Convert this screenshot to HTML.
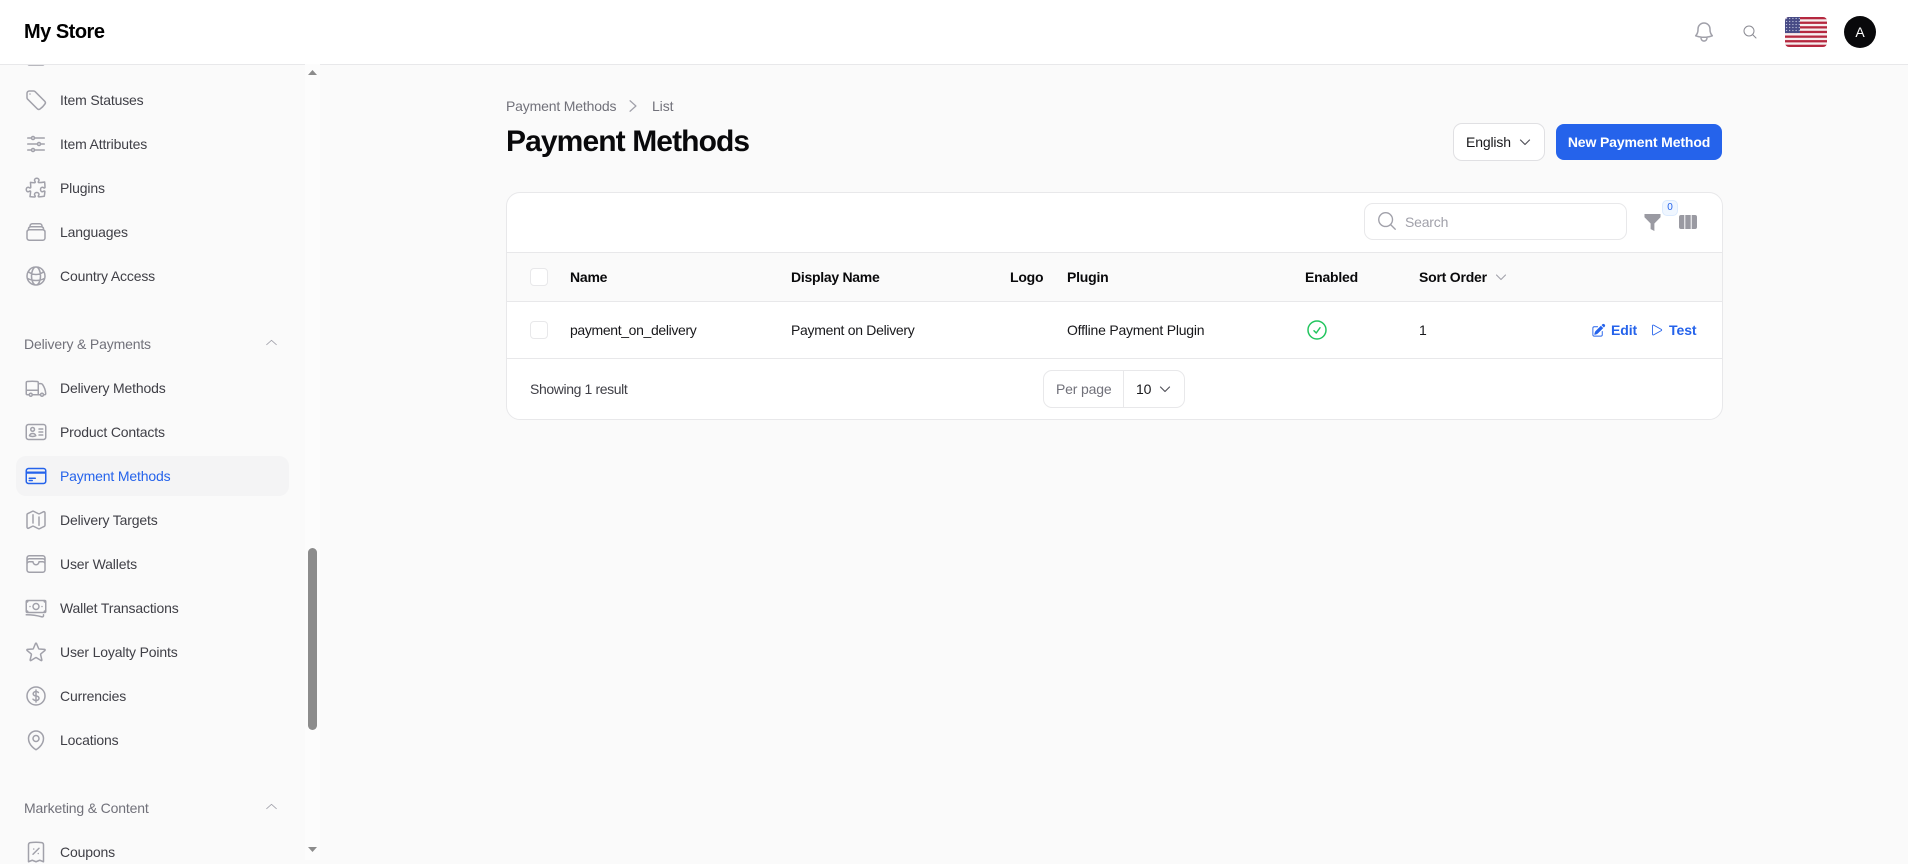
<!DOCTYPE html>
<html lang="en"><head><meta charset="utf-8"><title>Payment Methods</title>
<style>
*{box-sizing:border-box}
html,body{margin:0;padding:0;width:1908px;height:860px;overflow:hidden;background:#fafafa;font-family:"Liberation Sans",sans-serif;color:#18181b}
.t{position:absolute;white-space:nowrap;line-height:20px;font-size:14px;letter-spacing:-.3px}
.s{color:#3f3f46;left:60px;letter-spacing:-.16px}
.g{color:#71717a;left:24px;letter-spacing:-.16px}
.b{font-weight:700;color:#09090b;letter-spacing:-.22px}
.i{position:absolute;fill:none;stroke:#a1a1aa;stroke-width:1.5;stroke-linecap:round;stroke-linejoin:round}
.box{position:absolute;background:#fff;border:1px solid #e8e8ea}
.l{position:absolute;background:#e8e8ea;height:1px}
.cb{position:absolute;left:530px;width:18px;height:18px;border:1px solid #e8e8ea;border-radius:4px;background:#fff}
</style></head><body>

<div style="position:absolute;left:16px;top:456px;width:273px;height:40px;background:#f4f4f5;border-radius:10px"></div>

<svg class="i" style="left:24px;top:42px" width="24" height="24" viewBox="0 0 24 24"><rect x="3.500" y="2" width="17" height="21" rx="2"/></svg>
<svg class="i" style="left:24px;top:88px" width="24" height="24" viewBox="0 0 24 24"><path d="M9.568 3H5.250A2.250 2.250 0 0 0 3 5.250v4.318c0 .597.237 1.170.659 1.591l9.581 9.581c.699.699 1.780.872 2.607.330a18.095 18.095 0 0 0 5.223-5.223c.542-.827.369-1.908-.33-2.607L11.160 3.660A2.250 2.250 0 0 0 9.568 3Z"/><path d="M6 6h.008v.008H6V6Z"/></svg>
<svg class="i" style="left:24px;top:132px" width="24" height="24" viewBox="0 0 24 24"><path d="M10.500 6h9.750M10.500 6a1.500 1.500 0 1 1-3 0m3 0a1.500 1.500 0 1 0-3 0M3.750 6H7.500m3 12h9.750m-9.750 0a1.500 1.500 0 0 1-3 0m3 0a1.500 1.500 0 0 0-3 0m-3.750 0H7.500m9-6h3.750m-3.750 0a1.500 1.500 0 0 1-3 0m3 0a1.500 1.500 0 0 0-3 0m-9.750 0h9.750"/></svg>
<svg class="i" style="left:24px;top:176px" width="24" height="24" viewBox="0 0 24 24"><path d="M14.250 6.087c0-.355.186-.676.401-.959.221-.29.349-.634.349-1.003 0-1.036-1.007-1.875-2.250-1.875s-2.250.84-2.250 1.875c0 .369.128.713.349 1.003.215.283.401.604.401.959a.64.64 0 0 1-.657.643 48.390 48.390 0 0 1-4.163-.3c.186 1.613.293 3.250.315 4.907a.656.656 0 0 1-.658.663c-.355 0-.676-.186-.959-.401a1.647 1.647 0 0 0-1.003-.349c-1.036 0-1.875 1.007-1.875 2.250s.84 2.250 1.875 2.250c.369 0 .713-.128 1.003-.349.283-.215.604-.401.959-.401.31 0 .555.26.532.57a48.039 48.039 0 0 1-.642 5.056c1.518.19 3.058.309 4.616.354a.64.64 0 0 0 .657-.643c0-.355-.186-.676-.401-.959a1.647 1.647 0 0 1-.349-1.003c0-1.035 1.008-1.875 2.250-1.875 1.243 0 2.250.84 2.250 1.875 0 .369-.128.713-.349 1.003-.215.283-.4.604-.4.959 0 .333.277.599.61.58a48.100 48.100 0 0 0 5.427-.63 48.050 48.050 0 0 0 .582-4.717.532.532 0 0 0-.533-.57c-.355 0-.676.186-.959.401-.29.221-.634.349-1.003.349-1.035 0-1.875-1.007-1.875-2.250s.84-2.250 1.875-2.250c.37 0 .713.128 1.003.349.283.215.604.401.96.401a.656.656 0 0 0 .658-.663 48.422 48.422 0 0 0-.37-5.360c-1.886.342-3.810.574-5.766.689a.578.578 0 0 1-.61-.58Z"/></svg>
<svg class="i" style="left:24px;top:220px" width="24" height="24" viewBox="0 0 24 24"><path d="M6 6.878V6a2.250 2.250 0 0 1 2.250-2.250h7.500A2.250 2.250 0 0 1 18 6v.878m-12 0c.235-.083.487-.128.75-.128h10.500c.263 0 .515.045.75.128m-12 0A2.250 2.250 0 0 0 4.500 9v.878m13.500-3A2.250 2.250 0 0 1 19.500 9v.878m0 0a2.246 2.246 0 0 0-.75-.128H5.250c-.263 0-.515.045-.75.128m15 0A2.250 2.250 0 0 1 21 12v6a2.250 2.250 0 0 1-2.250 2.250H5.250A2.250 2.250 0 0 1 3 18v-6c0-.98.626-1.813 1.500-2.122"/></svg>
<svg class="i" style="left:24px;top:264px" width="24" height="24" viewBox="0 0 24 24"><path d="M12 21a9.004 9.004 0 0 0 8.716-6.747M12 21a9.004 9.004 0 0 1-8.716-6.747M12 21c2.485 0 4.500-4.030 4.500-9S14.485 3 12 3m0 18c-2.485 0-4.500-4.030-4.500-9S9.515 3 12 3m0 0a8.997 8.997 0 0 1 7.843 4.582M12 3a8.997 8.997 0 0 0-7.843 4.582m15.686 0A11.953 11.953 0 0 1 12 10.500c-2.998 0-5.740-1.100-7.843-2.918m15.686 0A8.959 8.959 0 0 1 21 12c0 .778-.099 1.533-.284 2.253m0 0A17.919 17.919 0 0 1 12 16.500c-3.162 0-6.133-.815-8.716-2.247m0 0A9.015 9.015 0 0 1 3 12c0-1.605.42-3.113 1.157-4.418"/></svg>
<svg class="i" style="left:24px;top:376px" width="24" height="24" viewBox="0 0 24 24"><path d="M8.250 18.750a1.500 1.500 0 0 1-3 0m3 0a1.500 1.500 0 0 0-3 0m3 0h6m-9 0H3.375a1.125 1.125 0 0 1-1.125-1.125V14.250m17.250 4.500a1.500 1.500 0 0 1-3 0m3 0a1.500 1.500 0 0 0-3 0m3 0h1.125c.621 0 1.129-.504 1.090-1.124a17.902 17.902 0 0 0-3.213-9.193 2.056 2.056 0 0 0-1.580-.86H14.250M16.500 18.750h-2.250m0-11.177v-.958c0-.568-.422-1.048-.987-1.106a48.554 48.554 0 0 0-10.026 0 1.106 1.106 0 0 0-.987 1.106v7.635m12-6.677v6.677m0 4.500v-4.500m0 0h-12"/></svg>
<svg class="i" style="left:24px;top:420px" width="24" height="24" viewBox="0 0 24 24"><path d="M15 9h3.750M15 12h3.750M15 15h3.750M4.500 19.500h15a2.250 2.250 0 0 0 2.250-2.250V6.750A2.250 2.250 0 0 0 19.500 4.500h-15a2.250 2.250 0 0 0-2.250 2.250v10.500A2.250 2.250 0 0 0 4.500 19.500Zm6-10.125a1.875 1.875 0 1 1-3.750 0 1.875 1.875 0 0 1 3.750 0Zm1.294 6.336a6.721 6.721 0 0 1-3.170.789 6.721 6.721 0 0 1-3.168-.789 3.376 3.376 0 0 1 6.338 0Z"/></svg>
<svg class="i" style="left:24px;top:464px;stroke:#2563eb" width="24" height="24" viewBox="0 0 24 24"><path d="M2.250 8.250h19.500M2.250 9h19.500m-16.500 5.250h6m-6 2.250h3m-3.750 3h15a2.250 2.250 0 0 0 2.250-2.250V6.750A2.250 2.250 0 0 0 19.500 4.500h-15a2.250 2.250 0 0 0-2.250 2.250v10.500A2.250 2.250 0 0 0 4.500 19.500Z"/></svg>
<svg class="i" style="left:24px;top:508px" width="24" height="24" viewBox="0 0 24 24"><path d="M9 6.750V15m6-6v8.250m.503 3.498 4.875-2.437c.381-.19.622-.58.622-1.006V4.820c0-.836-.88-1.380-1.628-1.006l-3.869 1.934c-.317.159-.69.159-1.006 0L9.503 3.252a1.125 1.125 0 0 0-1.006 0L3.622 5.689C3.240 5.880 3 6.270 3 6.695V19.180c0 .836.88 1.380 1.628 1.006l3.869-1.934c.317-.159.69-.159 1.006 0l4.994 2.497c.317.158.69.158 1.006 0Z"/></svg>
<svg class="i" style="left:24px;top:552px" width="24" height="24" viewBox="0 0 24 24"><path d="M21 12a2.250 2.250 0 0 0-2.250-2.250H15a3 3 0 1 1-6 0H5.250A2.250 2.250 0 0 0 3 12m18 0v6a2.250 2.250 0 0 1-2.250 2.250H5.250A2.250 2.250 0 0 1 3 18v-6m18 0V9M3 12V9m18 0a2.250 2.250 0 0 0-2.250-2.250H5.250A2.250 2.250 0 0 0 3 9m18 0V6a2.250 2.250 0 0 0-2.250-2.250H5.250A2.250 2.250 0 0 0 3 6v3"/></svg>
<svg class="i" style="left:24px;top:596px" width="24" height="24" viewBox="0 0 24 24"><path d="M2.250 18.750a60.070 60.070 0 0 1 15.797 2.101c.727.198 1.453-.342 1.453-1.096V18.750M3.750 4.500v.75A.75.75 0 0 1 3 6h-.75m0 0v-.375c0-.621.504-1.125 1.125-1.125H20.250M2.250 6v9m18-10.500v.75c0 .414.336.75.75.75h.75m-1.500-1.500h.375c.621 0 1.125.504 1.125 1.125v9.750c0 .621-.504 1.125-1.125 1.125h-.375m1.500-1.500H21a.75.75 0 0 0-.75.75v.75m0 0H3.750m0 0h-.375a1.125 1.125 0 0 1-1.125-1.125V15m1.500 1.500v-.75A.75.75 0 0 0 3 15h-.75M15 10.500a3 3 0 1 1-6 0 3 3 0 0 1 6 0Zm3 0h.008v.008H18V10.500Zm-12 0h.008v.008H6V10.500Z"/></svg>
<svg class="i" style="left:24px;top:640px" width="24" height="24" viewBox="0 0 24 24"><path d="M11.480 3.499a.562.562 0 0 1 1.040 0l2.125 5.111a.563.563 0 0 0 .475.345l5.518.442c.499.04.701.663.321.988l-4.204 3.602a.563.563 0 0 0-.182.557l1.285 5.385a.562.562 0 0 1-.84.61l-4.725-2.885a.562.562 0 0 0-.586 0L6.982 20.540a.562.562 0 0 1-.84-.61l1.285-5.386a.562.562 0 0 0-.182-.557l-4.204-3.602a.562.562 0 0 1 .321-.988l5.518-.442a.563.563 0 0 0 .475-.345L11.480 3.500Z"/></svg>
<svg class="i" style="left:24px;top:684px" width="24" height="24" viewBox="0 0 24 24"><path d="M12 6v12m-3-2.818.879.659c1.171.879 3.070.879 4.242 0 1.172-.879 1.172-2.303 0-3.182C13.536 12.219 12.768 12 12 12c-.725 0-1.450-.22-2.003-.659-1.106-.879-1.106-2.303 0-3.182s2.900-.879 4.006 0l.415.33M21 12a9 9 0 1 1-18 0 9 9 0 0 1 18 0Z"/></svg>
<svg class="i" style="left:24px;top:728px" width="24" height="24" viewBox="0 0 24 24"><path d="M15 10.500a3 3 0 1 1-6 0 3 3 0 0 1 6 0Z"/><path d="M19.500 10.500c0 7.142-7.500 11.250-7.500 11.250S4.500 17.642 4.500 10.500a7.500 7.500 0 1 1 15 0Z"/></svg>
<svg class="i" style="left:24px;top:840px" width="24" height="24" viewBox="0 0 24 24"><path d="m9 14.250 6-6m4.500-3.493V21.750l-3.750-1.500-3.750 1.500-3.750-1.500-3.750 1.500V4.757c0-1.108.806-2.057 1.907-2.185a48.507 48.507 0 0 1 11.186 0c1.100.128 1.907 1.077 1.907 2.185ZM9.750 9h.008v.008H9.750V9Zm4.500 4.500h.008v.008h-.008V13.500Z"/></svg>
<svg class="i" style="left:265px;top:336px" width="13" height="13" viewBox="0 0 24 24"><path d="m3 16 9-8 9 8"/></svg>
<svg class="i" style="left:265px;top:800px" width="13" height="13" viewBox="0 0 24 24"><path d="m3 16 9-8 9 8"/></svg>

<div class="t s" style="top:90px">Item Statuses</div>
<div class="t s" style="top:134px">Item Attributes</div>
<div class="t s" style="top:178px">Plugins</div>
<div class="t s" style="top:222px">Languages</div>
<div class="t s" style="top:266px">Country Access</div>
<div class="t g" style="top:334px">Delivery &amp; Payments</div>
<div class="t s" style="top:378px">Delivery Methods</div>
<div class="t s" style="top:422px">Product Contacts</div>
<div class="t s" style="top:466px;color:#2563eb">Payment Methods</div>
<div class="t s" style="top:510px">Delivery Targets</div>
<div class="t s" style="top:554px">User Wallets</div>
<div class="t s" style="top:598px">Wallet Transactions</div>
<div class="t s" style="top:642px">User Loyalty Points</div>
<div class="t s" style="top:686px">Currencies</div>
<div class="t s" style="top:730px">Locations</div>
<div class="t g" style="top:798px">Marketing &amp; Content</div>
<div class="t s" style="top:842px">Coupons</div>

<div style="position:absolute;left:0;top:0;width:1908px;height:65px;background:#fff;border-bottom:1px solid #e8e8ea"></div>
<div style="position:absolute;left:305px;top:64px;width:15px;height:796px;background:#fcfcfc"></div>
<div style="position:absolute;left:308px;top:548px;width:9px;height:182px;background:#8c8c8c;border-radius:5px"></div>
<svg style="position:absolute;left:307px;top:68px" width="11" height="8"><path d="M1 7 5.500 2 10 7Z" fill="#8c8c8c"/></svg>
<svg style="position:absolute;left:307px;top:846px" width="11" height="8"><path d="M1 1 5.500 6 10 1Z" fill="#8c8c8c"/></svg>

<div class="t b" style="left:24px;top:20px;font-size:20px;line-height:24px;letter-spacing:-.5px;color:#000">My Store</div>
<svg class="i" style="left:1692px;top:20px" width="24" height="24" viewBox="0 0 24 24"><path d="M14.857 17.082a23.848 23.848 0 0 0 5.454-1.310A8.967 8.967 0 0 1 18 9.750V9A6 6 0 0 0 6 9v.75a8.967 8.967 0 0 1-2.312 6.022c1.733.64 3.560 1.085 5.455 1.310m5.714 0a24.255 24.255 0 0 1-5.714 0m5.714 0a3 3 0 1 1-5.714 0"/></svg>
<svg class="i" style="left:1742px;top:24px;stroke:#8b8b93" width="16" height="16" viewBox="0 0 24 24"><path d="m21 21-5.197-5.197m0 0A7.500 7.500 0 1 0 5.196 5.196a7.500 7.500 0 0 0 10.607 10.607Z"/></svg>
<svg style="position:absolute;left:1785px;top:17px" width="42" height="30" viewBox="0 0 42 30">
<defs><clipPath id="fc"><rect width="42" height="30" rx="4"/></clipPath>
<pattern id="st" width="3.200" height="3" patternUnits="userSpaceOnUse"><circle cx="1.500" cy="1.500" r=".6" fill="#cfd2e6"/></pattern></defs>
<g clip-path="url(#fc)"><rect width="42" height="30" fill="#f6eff0"/>
<g fill="#b5283f"><rect y="0" width="42" height="2.300"/><rect y="4.600" width="42" height="2.300"/><rect y="9.200" width="42" height="2.300"/><rect y="13.800" width="42" height="2.300"/><rect y="18.500" width="42" height="2.300"/><rect y="23.100" width="42" height="2.300"/><rect y="27.700" width="42" height="2.300"/></g>
<rect width="15" height="16" fill="#474a85"/><rect width="15" height="16" fill="url(#st)"/></g></svg>
<div style="position:absolute;left:1844px;top:16px;width:32px;height:32px;border-radius:50%;background:#09090b;color:#fff;font-size:14px;line-height:32px;text-align:center">A</div>

<div class="t" style="left:506px;top:96px;color:#71717a;letter-spacing:-.17px">Payment Methods</div>
<svg class="i" style="left:626px;top:99px;stroke:#a1a1aa" width="14" height="14" viewBox="0 0 24 24"><path d="m7 3 10 9-10 9" stroke-width="2.200"/></svg>
<div class="t" style="left:652px;top:96px;color:#71717a;letter-spacing:-.1px">List</div>
<div class="t b" style="left:506px;top:124px;font-size:30px;line-height:36px;letter-spacing:-.9px">Payment Methods</div>

<div class="box" style="left:1453px;top:123px;width:92px;height:38px;border-radius:9px;border-color:#e0e0e3"></div>
<div class="t" style="left:1466px;top:132px;letter-spacing:-.15px">English</div>
<svg class="i" style="left:1519px;top:136px;stroke:#52525b" width="12" height="12" viewBox="0 0 24 24"><path d="m3 8 9 9 9-9" stroke-width="2.400"/></svg>
<div style="position:absolute;left:1556px;top:124px;width:166px;height:36px;border-radius:8px;background:#2563eb;color:#fff;font-weight:700;font-size:14px;line-height:36px;text-align:center;letter-spacing:-.13px">New Payment Method</div>

<div class="box" style="left:506px;top:192px;width:1217px;height:228px;border-radius:14px"></div>
<div class="box" style="left:1364px;top:203px;width:263px;height:37px;border-radius:9px"></div>
<svg class="i" style="left:1376px;top:210px;stroke:#a1a1aa" width="22" height="22" viewBox="0 0 24 24"><path d="m21 21-5.197-5.197m0 0A7.500 7.500 0 1 0 5.196 5.196a7.500 7.500 0 0 0 10.607 10.607Z"/></svg>
<div class="t" style="left:1405px;top:212px;color:#a1a1aa;letter-spacing:-.2px">Search</div>
<svg style="position:absolute;left:1644px;top:213px" width="17" height="19" viewBox="0 0 18 20"><path d="M0.500 1H17.500V4.500L11 11V19L7 17V11L0.500 4.500Z" fill="#9a9aa2"/></svg>
<div style="position:absolute;left:1662px;top:200px;width:16px;height:16px;border-radius:5px;background:#eff6ff;border:1px solid #dbeafe;color:#2563eb;font-size:10px;line-height:14px;text-align:center">0</div>
<svg style="position:absolute;left:1679px;top:215px" width="18" height="14" viewBox="0 0 18 14"><path d="M2 0H5.300V14H2Q0 14 0 12V2Q0 0 2 0ZM6.300 0H11.700V14H6.300ZM12.700 0H16Q18 0 18 2V12Q18 14 16 14H12.700Z" fill="#9a9aa2"/></svg>

<div style="position:absolute;left:507px;top:252px;width:1215px;height:50px;background:#fafafa;border-top:1px solid #e8e8ea;border-bottom:1px solid #e8e8ea"></div>
<div class="cb" style="top:268px"></div>
<div class="t b" style="left:570px;top:267px">Name</div>
<div class="t b" style="left:791px;top:267px;letter-spacing:-.28px">Display Name</div>
<div class="t b" style="left:1010px;top:267px">Logo</div>
<div class="t b" style="left:1067px;top:267px">Plugin</div>
<div class="t b" style="left:1305px;top:267px">Enabled</div>
<div class="t b" style="left:1419px;top:267px">Sort Order</div>
<svg class="i" style="left:1495px;top:271px" width="12" height="12" viewBox="0 0 24 24"><path d="m3 8 9 9 9-9" stroke-width="2.200"/></svg>

<div class="cb" style="top:321px"></div>
<div class="t" style="left:570px;top:320px;letter-spacing:-.35px">payment_on_delivery</div>
<div class="t" style="left:791px;top:320px;letter-spacing:-.3px">Payment on Delivery</div>
<div class="t" style="left:1067px;top:320px;letter-spacing:-.22px">Offline Payment Plugin</div>
<svg class="i" style="left:1305px;top:318px;stroke:#22c55e" width="24" height="24" viewBox="0 0 24 24"><path d="M9 12.750 11.250 15 15 9.750M21 12a9 9 0 1 1-18 0 9 9 0 0 1 18 0Z"/></svg>
<div class="t" style="left:1419px;top:320px">1</div>
<svg style="position:absolute;left:1591px;top:323px" width="15" height="15" viewBox="0 0 24 24" fill="#2563eb"><path d="M21.731 2.269a2.625 2.625 0 0 0-3.712 0l-1.157 1.157 3.712 3.712 1.157-1.157a2.625 2.625 0 0 0 0-3.712ZM19.513 8.199l-3.712-3.712-8.400 8.400a5.250 5.250 0 0 0-1.320 2.214l-.8 2.685a.75.75 0 0 0 .933.933l2.685-.8a5.250 5.250 0 0 0 2.214-1.320l8.400-8.400Z"/><path d="M5.250 5.250a3 3 0 0 0-3 3v10.500a3 3 0 0 0 3 3h10.500a3 3 0 0 0 3-3V13.500a.75.75 0 0 0-1.500 0v5.250a1.500 1.500 0 0 1-1.500 1.500H5.250a1.500 1.500 0 0 1-1.500-1.500V8.250a1.500 1.500 0 0 1 1.500-1.500h5.250a.75.75 0 0 0 0-1.500H5.250Z"/></svg>
<div class="t" style="left:1611px;top:320px;color:#2563eb;font-weight:700;letter-spacing:-.1px">Edit</div>
<svg class="i" style="left:1649px;top:322px;stroke:#2563eb;stroke-width:1.300" width="16" height="16" viewBox="0 0 24 24"><path d="M5.250 5.653c0-.856.917-1.398 1.667-.986l11.540 6.347a1.125 1.125 0 0 1 0 1.972l-11.540 6.347a1.125 1.125 0 0 1-1.667-.986V5.653Z"/></svg>
<div class="t" style="left:1669px;top:320px;color:#2563eb;font-weight:700;letter-spacing:-.05px">Test</div>
<div class="l" style="left:507px;top:358px;width:1215px"></div>

<div class="t" style="left:530px;top:379px;color:#3f3f46;letter-spacing:-.38px">Showing 1 result</div>
<div class="box" style="left:1043px;top:370px;width:142px;height:38px;border-radius:9px"></div>
<div style="position:absolute;left:1123px;top:371px;width:1px;height:36px;background:#e8e8ea"></div>
<div class="t" style="left:1056px;top:379px;color:#71717a;letter-spacing:-.17px">Per page</div>
<div class="t" style="left:1136px;top:379px;letter-spacing:-.2px">10</div>
<svg class="i" style="left:1159px;top:383px;stroke:#52525b" width="12" height="12" viewBox="0 0 24 24"><path d="m3 8 9 9 9-9" stroke-width="2.400"/></svg>
</body></html>
